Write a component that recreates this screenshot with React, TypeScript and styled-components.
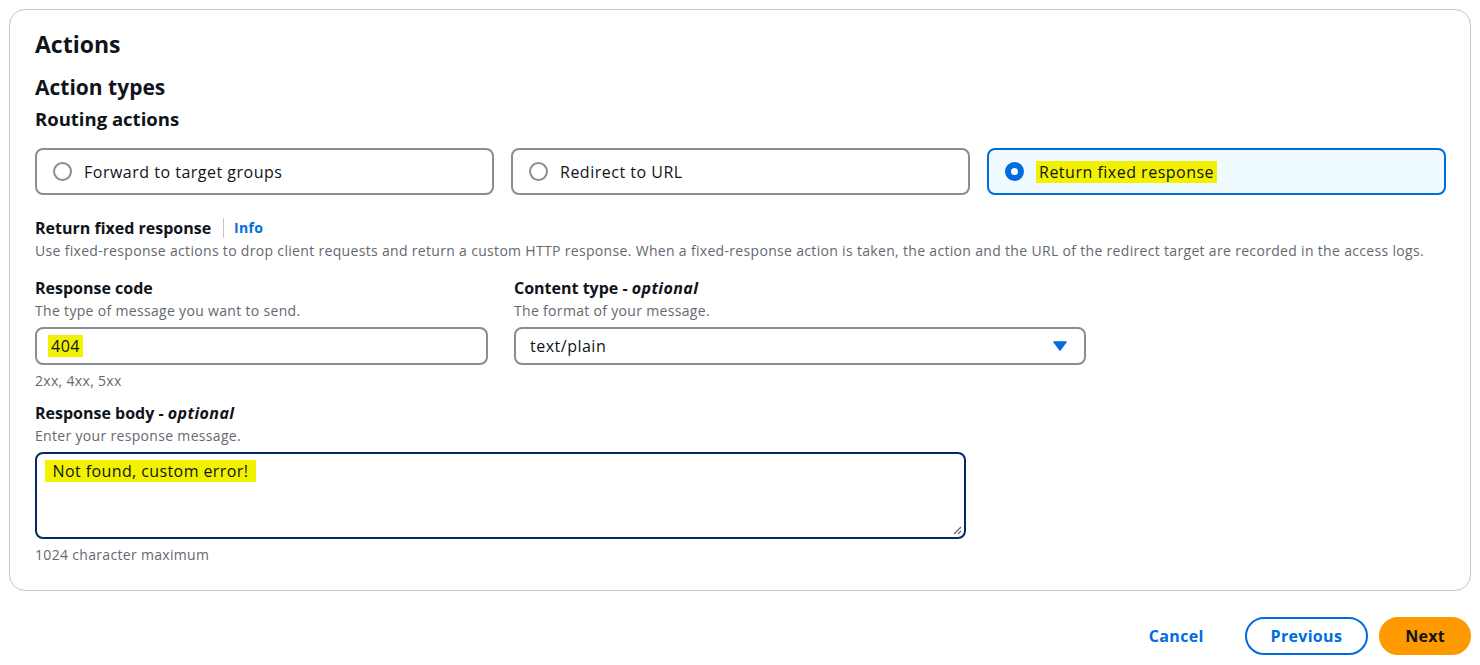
import { createGlobalStyle, styled } from 'styled-components';

const GlobalStyle = createGlobalStyle`
  body {
    margin: 0;
    background: #ffffff;
    font-family: 'Open Sans', 'Noto Sans', sans-serif;
    color: #0f141a;
  }
`;

const Page = styled.div`
  padding: 9px 9px 10px 9px;
`;

const Container = styled.section`
  border: 1px solid #c6c6cd;
  border-radius: 16px;
  padding: 19px 25px 26px 25px;
`;

const Heading = styled.h2<{ $size: number; $line: number; $gap: number }>`
  margin: ${(p) => p.$gap}px 0 0 0;
  font-size: ${(p) => p.$size}px;
  line-height: ${(p) => p.$line}px;
  font-weight: 700;
`;

const Tiles = styled.div`
  display: grid;
  grid-template-columns: repeat(3, 459px);
  gap: 17px;
  margin-top: 17px;
`;

const Tile = styled.label<{ $checked?: boolean }>`
  display: flex;
  align-items: center;
  gap: 12px;
  height: 47px;
  box-sizing: border-box;
  padding: 0 16px;
  border: 2px solid ${(p) => (p.$checked ? '#006ce0' : '#8c8c94')};
  background: ${(p) => (p.$checked ? '#f0fbff' : '#ffffff')};
  border-radius: 8px;
  font-size: 16px;
  letter-spacing: 0.5px;
  cursor: pointer;
`;

const Radio = styled.span<{ $checked?: boolean }>`
  width: 19px;
  height: 19px;
  box-sizing: border-box;
  border-radius: 50%;
  border: ${(p) => (p.$checked ? '6px solid #006ce0' : '2px solid #8c8c94')};
  background: #ffffff;
  flex: none;
`;

const Mark = styled.mark`
  background: #f2f200;
  color: inherit;
  padding: 0 3px;
`;

const SectionHead = styled.div`
  display: flex;
  align-items: center;
  margin-top: 22px;
  height: 22px;
`;

const Label = styled.span`
  font-size: 16px;
  font-weight: 700;
  line-height: 22px;
  em {
    font-weight: 700;
    font-style: italic;
    letter-spacing: 0.4px;
  }
`;

const InfoLink = styled.a`
  margin-left: 12px;
  padding-left: 10px;
  border-left: 1px solid #c6c6cd;
  font-size: 14px;
  font-weight: 700;
  line-height: 20px;
  letter-spacing: 0.3px;
  color: #006ce0;
  text-decoration: none;
`;

const Description = styled.div`
  font-size: 14px;
  line-height: 20px;
  letter-spacing: 0.32px;
  color: #656871;
  margin-top: 2px;
`;

const Hint = styled.div`
  font-size: 14px;
  line-height: 18px;
  letter-spacing: 0.32px;
  color: #656871;
  margin-top: 7px;
`;

const FieldRow = styled.div`
  display: flex;
  gap: 26px;
  margin-top: 16px;
`;

const Field = styled.div<{ $width: number; $top?: number }>`
  width: ${(p) => p.$width}px;
  margin-top: ${(p) => p.$top ?? 0}px;
`;

const InputBox = styled.div`
  margin-top: 6px;
  height: 38px;
  box-sizing: border-box;
  border: 2px solid #8c8c94;
  border-radius: 8px;
  padding: 0 17px 0 11px;
  display: flex;
  align-items: center;
  justify-content: space-between;
  font-size: 16px;
  letter-spacing: 0.5px;
`;

const SelectText = styled.span`
  padding-left: 3px;
`;

const TextArea = styled.div`
  position: relative;
  margin-top: 6px;
  height: 87px;
  box-sizing: border-box;
  border: 2px solid #002b66;
  border-radius: 8px;
  padding: 6px 8px;
  font-size: 16px;
  line-height: 22px;
  letter-spacing: 0.4px;
`;

const Grip = styled.svg`
  position: absolute;
  right: 2px;
  bottom: 2px;
`;

const Footer = styled.div`
  display: flex;
  justify-content: flex-end;
  align-items: center;
  gap: 11px;
  margin-top: 26px;
`;

const Button = styled.button<{ $variant: 'link' | 'normal' | 'primary' }>`
  font-family: inherit;
  font-size: 16px;
  font-weight: 700;
  letter-spacing: 0.3px;
  height: 38px;
  box-sizing: border-box;
  padding: 0 24px;
  border-radius: 20px;
  cursor: pointer;
  border: 2px solid
    ${(p) => (p.$variant === 'normal' ? '#006ce0' : p.$variant === 'primary' ? '#ff9900' : 'transparent')};
  background: ${(p) => (p.$variant === 'primary' ? '#ff9900' : '#ffffff')};
  color: ${(p) => (p.$variant === 'primary' ? '#0f141a' : '#006ce0')};
  margin-right: ${(p) => (p.$variant === 'link' ? 4 : 0)}px;
`;

const tiles = [
  { label: 'Forward to target groups', checked: false },
  { label: 'Redirect to URL', checked: false },
  { label: 'Return fixed response', checked: true },
];

export default function App() {
  return (
    <Page>
      <GlobalStyle />
      <Container>
        <Heading $size={23} $line={30} $gap={0}>Actions</Heading>
        <Heading $size={21} $line={28} $gap={14}>Action types</Heading>
        <Heading $size={18.5} $line={24} $gap={6}>Routing actions</Heading>
        <Tiles>
          {tiles.map((t) => (
            <Tile key={t.label} $checked={t.checked}>
              <Radio $checked={t.checked} />
              {t.checked ? <Mark>{t.label}</Mark> : t.label}
            </Tile>
          ))}
        </Tiles>

        <SectionHead>
          <Label>Return fixed response</Label>
          <InfoLink href="#">Info</InfoLink>
        </SectionHead>
        <Description>
          Use fixed-response actions to drop client requests and return a custom HTTP response. When a
          fixed-response action is taken, the action and the URL of the redirect target are recorded in
          the access logs.
        </Description>

        <FieldRow>
          <Field $width={453}>
            <Label>Response code</Label>
            <Description>The type of message you want to send.</Description>
            <InputBox>
              <span>
                <Mark>404</Mark>
              </span>
            </InputBox>
            <Hint>2xx, 4xx, 5xx</Hint>
          </Field>
          <Field $width={572}>
            <Label>
              Content type - <em>optional</em>
            </Label>
            <Description>The format of your message.</Description>
            <InputBox>
              <SelectText>text/plain</SelectText>
              <svg width="14" height="10" viewBox="0 0 14 10">
                <path d="M1 1h12L7 9z" fill="#006ce0" stroke="#006ce0" strokeWidth="1.5" strokeLinejoin="round" />
              </svg>
            </InputBox>
          </Field>
        </FieldRow>

        <Field $width={931} $top={12}>
          <Label>
            Response body - <em>optional</em>
          </Label>
          <Description>Enter your response message.</Description>
          <TextArea>
            <Mark>&nbsp;Not found, custom error!&nbsp;</Mark>
            <Grip width="10" height="10" viewBox="0 0 10 10">
              <path d="M9 2L2 9M9 6L6 9" stroke="#656871" strokeWidth="1.2" />
            </Grip>
          </TextArea>
          <Hint>1024 character maximum</Hint>
        </Field>
      </Container>

      <Footer>
        <Button $variant="link">Cancel</Button>
        <Button $variant="normal">Previous</Button>
        <Button $variant="primary">Next</Button>
      </Footer>
    </Page>
  );
}
